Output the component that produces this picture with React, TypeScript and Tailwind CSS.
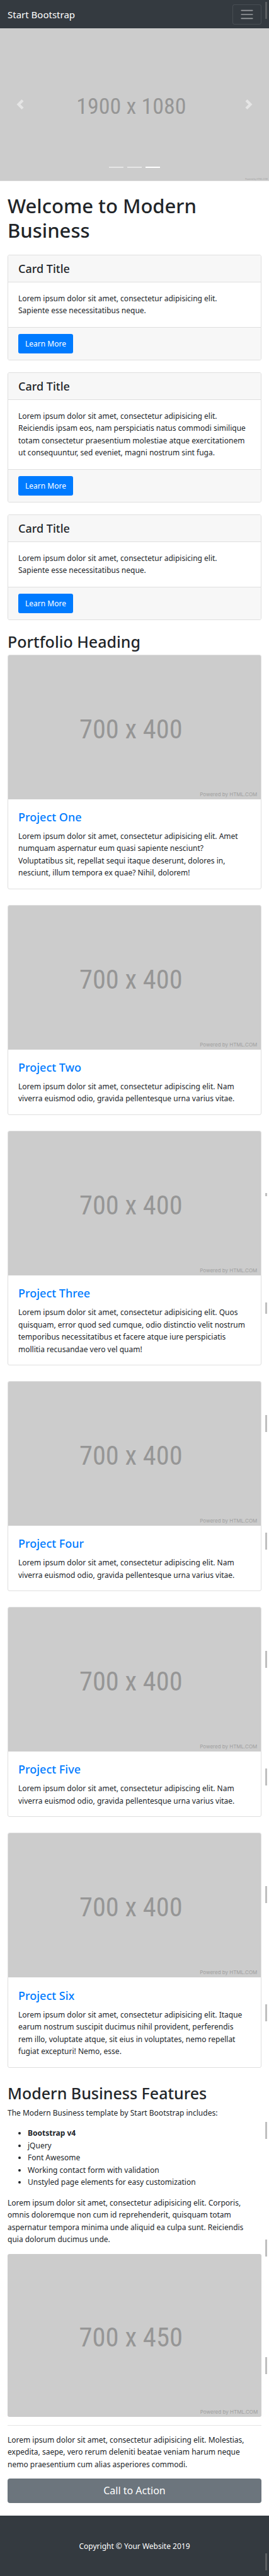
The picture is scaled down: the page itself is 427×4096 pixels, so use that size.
import React from "react";

type PlaceholderProps = {
  width: number;
  height: number;
  fontSize: number;
  centerX: number;
  baseline: number;
  creditBaseline: number;
  className?: string;
};

function Placeholder({
  width,
  height,
  fontSize,
  centerX,
  baseline,
  creditBaseline,
  className = "",
}: PlaceholderProps) {
  const label = `${width} x ${height}`;
  return (
    <svg viewBox={`0 0 ${width} ${height}`} className={`block w-full ${className}`} role="img" aria-label={label}>
      <rect width={width} height={height} fill="#cccccc" />
      <text
        x={centerX}
        y={baseline}
        textAnchor="middle"
        fontSize={fontSize}
        fill="#969696"
        className="font-['Roboto_Condensed','Liberation_Sans',sans-serif]"
      >
        {label}
      </text>
      <text
        x={width - 10}
        y={creditBaseline}
        textAnchor="end"
        fontSize={14}
        fill="#a0a0a0"
        className="font-['Inter',sans-serif]"
      >
        Powered by HTML.COM
      </text>
    </svg>
  );
}

const shortText = `Lorem ipsum dolor sit amet, consectetur adipisicing elit.
Sapiente esse necessitatibus neque.`;
const longText = `Lorem ipsum dolor sit amet, consectetur adipisicing elit.
Reiciendis ipsam eos, nam perspiciatis natus commodi similique
totam consectetur praesentium molestiae atque exercitationem
ut consequuntur, sed eveniet, magni nostrum sint fuga.`;

const cards = [shortText, longText, shortText];

const viverra = `Lorem ipsum dolor sit amet, consectetur adipiscing elit. Nam
viverra euismod odio, gravida pellentesque urna varius vitae.`;

const projects = [
  {
    title: "Project One",
    text: `Lorem ipsum dolor sit amet, consectetur adipisicing elit. Amet
numquam aspernatur eum quasi sapiente nesciunt?
Voluptatibus sit, repellat sequi itaque deserunt, dolores in,
nesciunt, illum tempora ex quae? Nihil, dolorem!`,
  },
  { title: "Project Two", text: viverra },
  {
    title: "Project Three",
    text: `Lorem ipsum dolor sit amet, consectetur adipisicing elit. Quos
quisquam, error quod sed cumque, odio distinctio velit nostrum
temporibus necessitatibus et facere atque iure perspiciatis
mollitia recusandae vero vel quam!`,
  },
  { title: "Project Four", text: viverra },
  { title: "Project Five", text: viverra },
  {
    title: "Project Six",
    text: `Lorem ipsum dolor sit amet, consectetur adipisicing elit. Itaque
earum nostrum suscipit ducimus nihil provident, perferendis
rem illo, voluptate atque, sit eius in voluptates, nemo repellat
fugiat excepturi! Nemo, esse.`,
  },
];

const featuresText = `Lorem ipsum dolor sit amet, consectetur adipisicing elit. Corporis,
omnis doloremque non cum id reprehenderit, quisquam totam
aspernatur tempora minima unde aliquid ea culpa sunt. Reiciendis
quia dolorum ducimus unde.`;

const actionText = `Lorem ipsum dolor sit amet, consectetur adipisicing elit. Molestias,
expedita, saepe, vero rerum deleniti beatae veniam harum neque
nemo praesentium cum alias asperiores commodi.`;

const features = ["jQuery", "Font Awesome", "Working contact form with validation", "Unstyled page elements for easy customization"];

const scrollMarks = [
  { top: 3, height: 27 },
  { top: 1897, height: 5 },
  { top: 2071, height: 18 },
  { top: 2250, height: 27 },
  { top: 2437, height: 27 },
  { top: 2625, height: 27 },
  { top: 2812, height: 27 },
  { top: 2999, height: 27 },
  { top: 3187, height: 27 },
  { top: 3374, height: 27 },
  { top: 3561, height: 27 },
  { top: 3748, height: 27 },
  { top: 4060, height: 27 },
];

function Navbar() {
  return (
    <nav className="flex h-[45px] items-center justify-between bg-[#343a40] px-3">
      <a href="#" className="text-[15px] leading-6 text-white">
        Start Bootstrap
      </a>
      <button
        type="button"
        aria-label="Toggle navigation"
        className="rounded-[3px] border border-white/10 px-[10px] py-[3px]"
      >
        <svg viewBox="0 0 30 30" className="block size-6">
          <path
            d="M4 7h22M4 15h22M4 23h22"
            stroke="#ffffff"
            strokeOpacity="0.5"
            strokeWidth="2"
            strokeLinecap="round"
            strokeMiterlimit="10"
          />
        </svg>
      </button>
    </nav>
  );
}

function Carousel() {
  return (
    <header className="relative">
      <Placeholder width={1900} height={1080} fontSize={160} centerX={927} baseline={603} creditBaseline={1072} />
      <button
        type="button"
        aria-label="Previous"
        className="absolute inset-y-0 left-0 flex w-[15%] items-center justify-center opacity-50"
      >
        <svg viewBox="0 0 8 8" className="size-4" fill="#ffffff">
          <path d="M5.25 0l-4 4 4 4 1.5-1.5-2.5-2.5 2.5-2.5-1.5-1.5z" />
        </svg>
      </button>
      <button
        type="button"
        aria-label="Next"
        className="absolute inset-y-0 right-0 flex w-[15%] items-center justify-center opacity-50"
      >
        <svg viewBox="0 0 8 8" className="size-4" fill="#ffffff">
          <path d="M2.75 0l-1.5 1.5 2.5 2.5-2.5 2.5 1.5 1.5 4-4-4-4z" />
        </svg>
      </button>
      <div className="absolute inset-x-0 bottom-[21px] flex justify-center gap-[6px]">
        <button type="button" aria-label="Slide 1" className="h-[2px] w-[23px] bg-white/50" />
        <button type="button" aria-label="Slide 2" className="h-[2px] w-[23px] bg-white/50" />
        <button type="button" aria-label="Slide 3" className="h-[2px] w-[23px] bg-white" />
      </div>
    </header>
  );
}

function InfoCard({ text }: { text: string }) {
  return (
    <article className="mb-[19px] overflow-hidden rounded-[3px] border border-[#dfdfdf]">
      <h4 className="border-b border-[#dfdfdf] bg-[#f7f7f7] px-4 py-[10px] text-lg leading-[22px] font-medium">
        Card Title
      </h4>
      <p className="p-4 whitespace-pre-line">{text}</p>
      <div className="flex border-t border-[#dfdfdf] bg-[#f7f7f7] px-4 py-[10px]">
        <a href="#" className="rounded-[3px] bg-[#007bff] px-[11px] py-[6px] leading-[19px] text-white">
          Learn More
        </a>
      </div>
    </article>
  );
}

function ProjectCard({ title, text }: { title: string; text: string }) {
  return (
    <article className="mb-[25px] overflow-hidden rounded-[3px] border border-[#dfdfdf]">
      <a href="#" className="block">
        <Placeholder width={700} height={400} fontSize={74} centerX={340} baseline={231} creditBaseline={391} />
      </a>
      <div className="px-4 pt-[17px] pb-[15px]">
        <h4 className="mb-[9px] text-lg leading-[23px] font-medium">
          <a href="#" className="text-[#007bff]">
            {title}
          </a>
        </h4>
        <p className="whitespace-pre-line">{text}</p>
      </div>
    </article>
  );
}

export default function App() {
  return (
    <div className="relative bg-white font-['Noto_Sans','Open_Sans',sans-serif] text-xs leading-relaxed text-[#212529]">
      <Navbar />
      <Carousel />

      <main className="px-3">
        <h1 className="mt-5 mb-[19px] text-[31px] leading-[39px] font-medium">Welcome to Modern Business</h1>
        {cards.map((text, i) => (
          <InfoCard key={i} text={text} />
        ))}

        <h2 className="mb-[5px] text-[25px] leading-[31px] font-medium">Portfolio Heading</h2>
        {projects.map((project) => (
          <ProjectCard key={project.title} title={project.title} text={project.text} />
        ))}

        <h2 className="mb-[6px] text-[25px] leading-[31px] font-medium">Modern Business Features</h2>
        <p className="mb-[13px]">The Modern Business template by Start Bootstrap includes:</p>
        <ul className="mb-[13px] list-disc pl-8">
          <li>
            <strong className="font-bold">Bootstrap v4</strong>
          </li>
          {features.map((feature) => (
            <li key={feature}>{feature}</li>
          ))}
        </ul>
        <p className="mb-[13px] whitespace-pre-line">{featuresText}</p>
        <Placeholder
          width={700}
          height={450}
          fontSize={74}
          centerX={340}
          baseline={256}
          creditBaseline={441}
          className="rounded-[3px]"
        />
        <hr className="my-[13px] border-t border-black/10" />
        <p className="mb-[13px] whitespace-pre-line">{actionText}</p>
        <a
          href="#"
          className="mb-5 block rounded-[4px] bg-[#6c757d] py-2 text-center text-base leading-[23px] text-white"
        >
          Call to Action
        </a>
      </main>

      <footer className="bg-[#343a40] px-3 py-[39px]">
        <p className="text-center text-white">Copyright © Your Website 2019</p>
      </footer>

      {scrollMarks.map((mark) => (
        <div
          key={mark.top}
          aria-hidden="true"
          className="absolute right-[3px] w-[3px] bg-[#808080]/50"
          style={{ top: mark.top, height: mark.height }}
        />
      ))}
    </div>
  );
}
